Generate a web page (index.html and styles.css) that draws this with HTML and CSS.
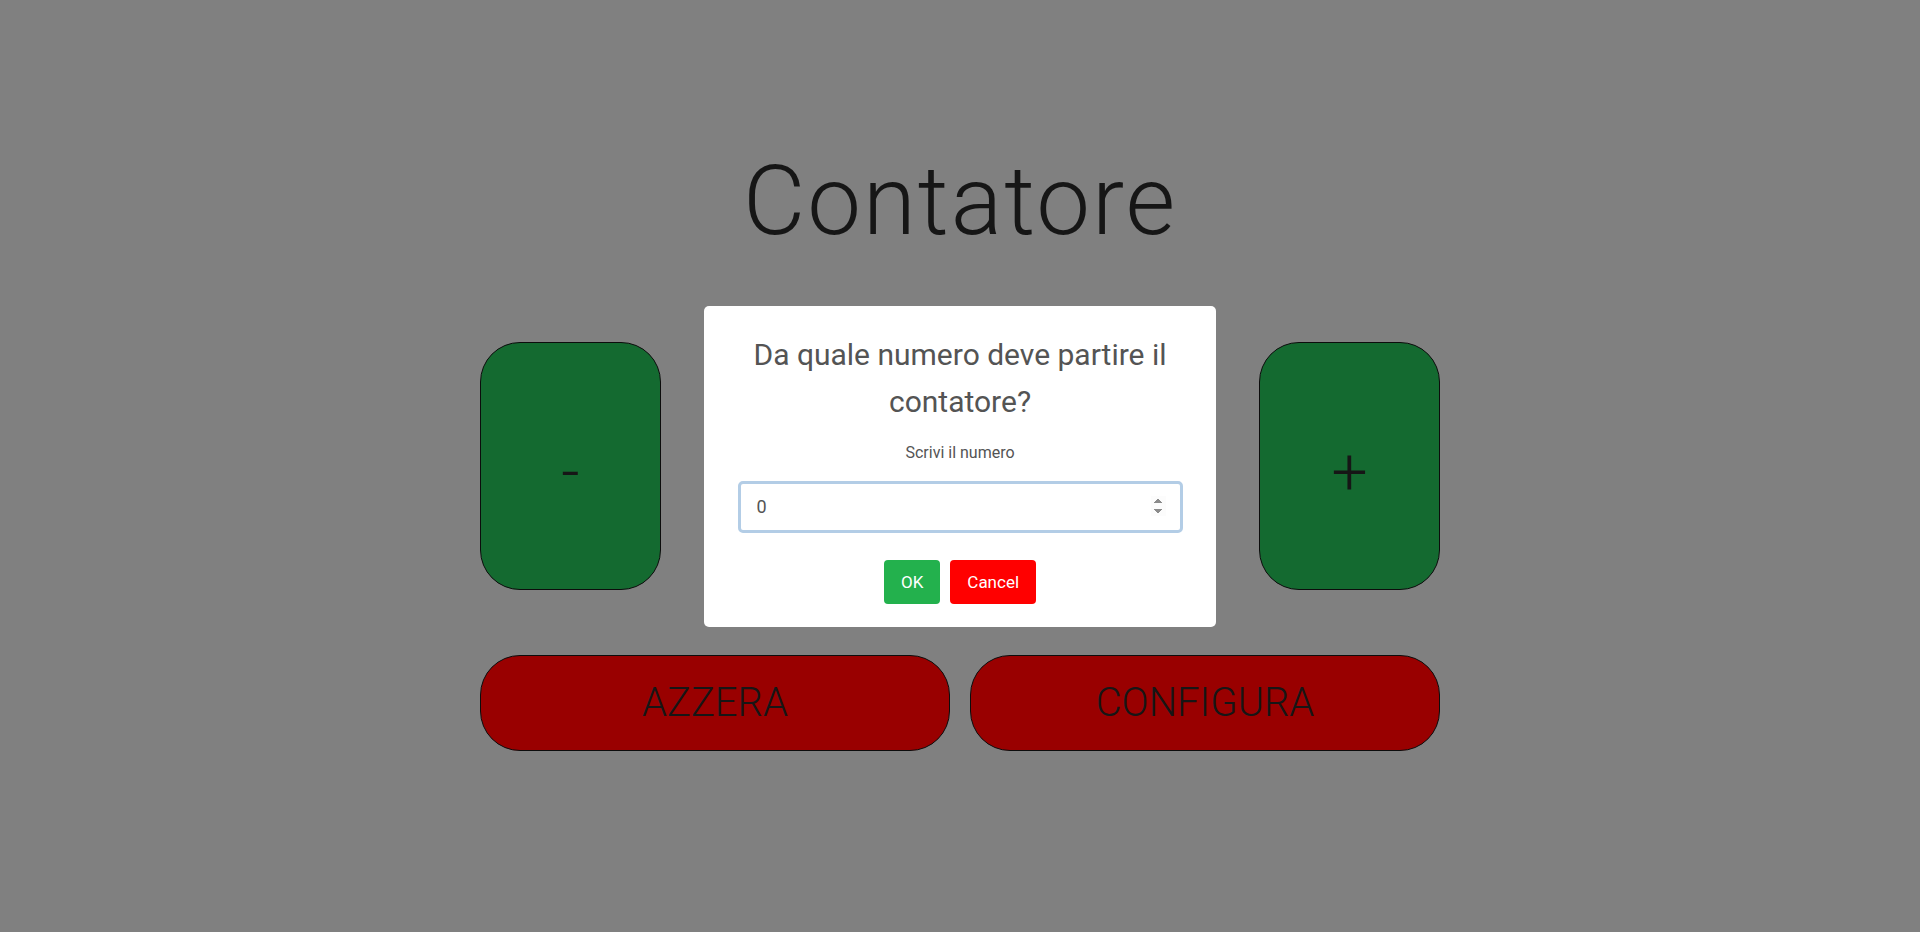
FILE: index.html
```html
<!DOCTYPE html>
<html lang="it">
<head>
<meta charset="utf-8">
<title>Contatore</title>
<link rel="stylesheet" href="styles.css">
</head>
<body>
<main class="page">
  <h1 class="title">Contatore</h1>
  <div class="counter-row">
    <button class="step-btn" type="button">-</button>
    <div class="count"></div>
    <button class="step-btn" type="button">+</button>
  </div>
  <div class="action-row">
    <button class="action-btn" type="button">AZZERA</button>
    <button class="action-btn" type="button">CONFIGURA</button>
  </div>
</main>

<div class="overlay">
  <div class="dialog" role="dialog">
    <h2 class="dialog-title">Da quale numero deve partire il contatore?</h2>
    <p class="dialog-text">Scrivi il numero</p>
    <input class="dialog-input" type="number" value="0" autofocus>
    <div class="dialog-actions">
      <button class="dlg-btn dlg-ok" type="button">OK</button>
      <button class="dlg-btn dlg-cancel" type="button">Cancel</button>
    </div>
  </div>
</div>
</body>
</html>
```

FILE: styles.css
```css
* {
  box-sizing: border-box;
}

html, body {
  margin: 0;
  height: 100%;
}

body {
  background: #808080;
  font-family: Roboto, "Liberation Sans", sans-serif;
  color: #161616;
}

.page {
  width: 960px;
  margin: 0 auto;
  padding-top: 145px;
}

.title {
  margin: 0;
  font-size: 96px;
  font-weight: 300;
  line-height: 112.5px;
  letter-spacing: 2px;
  text-align: center;
  color: #161616;
}

.counter-row {
  margin-top: 84px;
  display: grid;
  grid-template-columns: 181px 1fr 181px;
  height: 248px;
}

.step-btn {
  background: #146a30;
  border: 1px solid #0c0c0c;
  border-radius: 40px;
  font-family: inherit;
  font-size: 64px;
  font-weight: 300;
  color: #161616;
  padding: 14px 0 0;
  cursor: pointer;
}

.action-row {
  margin-top: 65px;
  display: grid;
  grid-template-columns: 1fr 1fr;
  gap: 20px;
}

.action-btn {
  height: 96px;
  background: #990000;
  border: 1px solid #0c0c0c;
  border-radius: 40px;
  font-family: inherit;
  font-size: 40px;
  font-weight: 300;
  color: #161616;
  padding: 0;
  cursor: pointer;
}

.overlay {
  position: fixed;
  inset: 0;
  display: flex;
  align-items: center;
  justify-content: center;
}

.dialog {
  width: 512px;
  background: #fff;
  border-radius: 5px;
  padding: 25px 0 23px;
  display: flex;
  flex-direction: column;
  align-items: center;
  text-align: center;
}

.dialog-title {
  margin: 0;
  padding: 0 30px;
  font-size: 30px;
  font-weight: 400;
  line-height: 47px;
  color: #545454;
}

.dialog-text {
  margin: 16px 0 0;
  font-size: 16px;
  line-height: 24px;
  color: #545454;
}

.dialog-input {
  margin-top: 16px;
  width: 445px;
  height: 52px;
  border: 3px solid #b3cde6;
  border-radius: 5px;
  padding: 0 14px 0 16px;
  font-family: inherit;
  font-size: 18px;
  color: #545454;
  outline: none;
  background: #fff;
}

.dialog-actions {
  margin-top: 27px;
  display: flex;
  gap: 10px;
}

.dlg-btn {
  height: 44px;
  border: 0;
  border-radius: 4px;
  padding: 0 17px;
  font-family: inherit;
  font-size: 17px;
  color: #fff;
  cursor: pointer;
}

.dlg-ok {
  background: #23b14d;
}

.dlg-cancel {
  background: #ff0000;
}
```
